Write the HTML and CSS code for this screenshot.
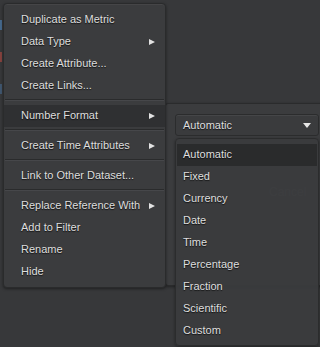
FILE: index.html
```html
<!DOCTYPE html>
<html lang="en">
<head>
  <meta charset="UTF-8">
  <title>Context Menu</title>
  <link rel="stylesheet" href="styles.css">
</head>
<body>
  <div class="stage">
    <div class="edge">
      <span class="mark blue"></span>
      <span class="mark red"></span>
      <span class="mark blue low"></span>
    </div>

    <ul class="menu">
      <li class="item">Duplicate as Metric</li>
      <li class="item sub">Data Type</li>
      <li class="item">Create Attribute...</li>
      <li class="item">Create Links...</li>
      <li class="sep"></li>
      <li class="item sub hot">Number Format</li>
      <li class="sep"></li>
      <li class="item sub">Create Time Attributes</li>
      <li class="sep"></li>
      <li class="item">Link to Other Dataset...</li>
      <li class="sep"></li>
      <li class="item sub">Replace Reference With</li>
      <li class="item">Add to Filter</li>
      <li class="item">Rename</li>
      <li class="item">Hide</li>
    </ul>

    <div class="panel">
      <div class="select">
        <span>Automatic</span>
        <span class="caret"></span>
      </div>
      <div class="ghost">Cancel</div>
    </div>

    <ul class="list">
      <li class="opt hot">Automatic</li>
      <li class="opt">Fixed</li>
      <li class="opt">Currency</li>
      <li class="opt">Date</li>
      <li class="opt">Time</li>
      <li class="opt">Percentage</li>
      <li class="opt">Fraction</li>
      <li class="opt">Scientific</li>
      <li class="opt">Custom</li>
    </ul>
  </div>
</body>
</html>
```

FILE: styles.css
```css
*, *::before, *::after { box-sizing:border-box; margin:0; padding:0; }
html, body { width:100%; height:100%; overflow:hidden; background:#37383a; }
body { font-family:'Liberation Sans', Arial, sans-serif; font-size:11px; color:#dedede; }
.stage { position:relative; width:320px; height:347px; }
ul { list-style:none; }

/* bits of the app showing at the left edge */
.edge { display:flex; flex-direction:column; gap:22px; padding-top:20px; width:3px; }
.mark { display:block; width:2px; height:10px; opacity:.8; }
.mark.blue { background:#4a76a3; }
.mark.red { background:#9a4640; }
.mark.low { opacity:.5; }

.menu {
  position:absolute; top:3px; left:3px; width:163px;
  padding:5px 0 4px;
  background:#3b3c3e;
  border:1px solid #2a2b2c; border-radius:4px;
  box-shadow:0 1px 3px rgba(0,0,0,.45), inset 0 1px 0 rgba(255,255,255,.05);
  z-index:3;
}
.item {
  position:relative; height:22px; line-height:21px;
  padding-left:17px;
  text-shadow:0 1px 1px rgba(0,0,0,.7);
  white-space:nowrap;
}
.item.hot { background:#2f3032; }
.item.sub::after {
  content:''; position:absolute; left:145px; top:8px;
  border-left:6px solid #e2e2e2;
  border-top:3.5px solid transparent; border-bottom:3.5px solid transparent;
}
.sep {
  height:8px; margin:0 1px;
  background:linear-gradient(#3b3c3e 0 2px, #2a2b2c 2px 3px, #46474a 3px 4px, #3b3c3e 4px);
}

.panel {
  position:absolute; top:103px; left:165px; width:160px; height:183px;
  background:#3b3c3e;
  border:1px solid #2a2b2c; border-radius:3px;
  box-shadow:0 1px 3px rgba(0,0,0,.4);
  padding:10px 0 0 9px;
  z-index:2;
}
.select {
  display:flex; align-items:center; justify-content:space-between;
  width:144px; height:22px; padding:0 7px 0 7px;
  background:#3a3b3d;
  border:1px solid #2b2c2d; border-radius:3px;
  box-shadow:inset 0 1px 0 rgba(255,255,255,.06);
  text-shadow:0 1px 1px rgba(0,0,0,.7);
}
.caret {
  border-top:5px solid #e6e6e6;
  border-left:4px solid transparent; border-right:4px solid transparent;
}
.ghost { margin:49px 0 0 94px; color:#5a5b5d; font-size:12px; }

.list {
  position:absolute; top:138px; left:175px; width:144px; height:208px;
  padding:5px 1px 0;
  background:rgba(58,59,61,.93);
  border:1px solid #2b2c2d; border-radius:4px;
  box-shadow:0 1px 3px rgba(0,0,0,.4);
  z-index:4;
}
.opt {
  height:22px; line-height:21px; padding-left:6px;
  text-shadow:0 1px 1px rgba(0,0,0,.7);
}
.opt.hot { background:#2a2b2c; }
```
